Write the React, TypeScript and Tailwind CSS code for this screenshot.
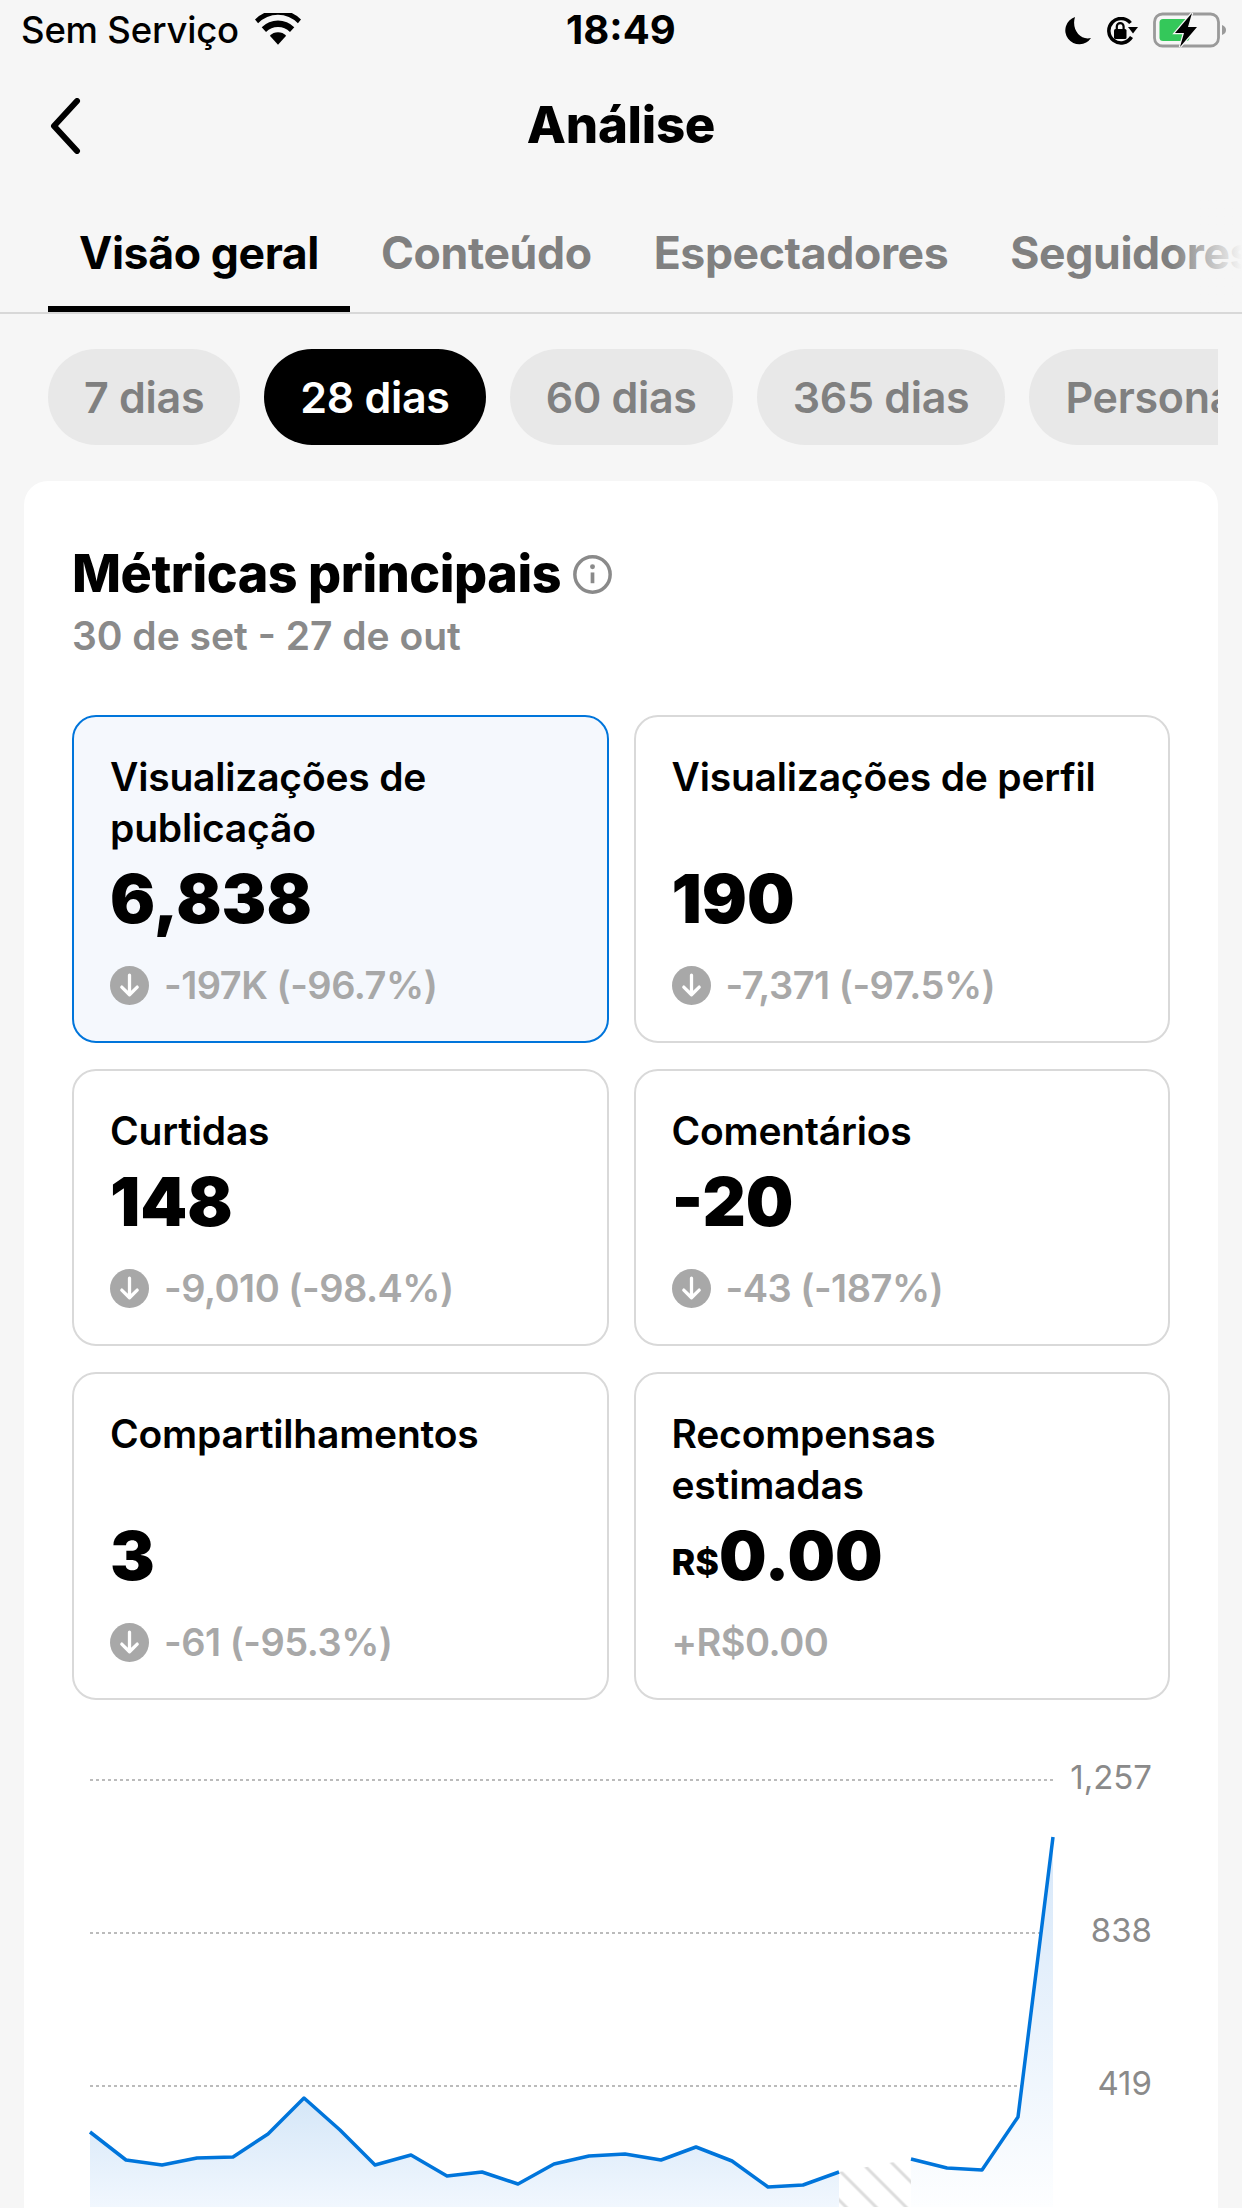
const F = "font-['Inter','Noto_Sans',sans-serif]";

const pts: [number, number][] = [[90,2133],[126,2161],[162,2166],[197,2159],[233,2158],[268,2135],[304,2099],[340,2131],[375,2166],[411,2156],[447,2177],[482,2173],[518,2185],[554,2165],[589,2157],[625,2155],[661,2161],[696,2148],[732,2162],[768,2188],[803,2186],[839,2173]];
const pts2: [number, number][] = [[911,2160],[947,2169],[982,2171],[1018,2118],[1053,1838]];
const line = (p: [number, number][]) => p.map((q) => q.join(",")).join(" ");

function Down() {
  return (
    <svg viewBox="0 0 38 38" className="w-[39px] h-[39px] shrink-0">
      <circle cx="19" cy="19" r="19" fill="#a8a8a8" />
      <path d="M19 9v19M11.5 20.5 19 28l7.5-7.5" fill="none" stroke="#fff" strokeWidth="3.2" strokeLinecap="round" strokeLinejoin="round" />
    </svg>
  );
}

function Metric({ label, value, prefix, change, active, icon = true, tall }: { label: string[]; value: string; prefix?: string; change: string; active?: boolean; icon?: boolean; tall?: boolean }) {
  return (
    <div className={`flex flex-col rounded-[24px] border-2 px-[36px] pt-[34px] ${tall ? "h-[328px]" : "h-[277px]"} ${active ? "border-[#0075db] bg-[#f5f8fd]" : "border-[#d9d9d9] bg-white"}`}>
      <div className={`text-[39px] leading-[51px] font-semibold tracking-[-0.2px] text-black whitespace-nowrap ${tall ? "h-[102px]" : "h-[51px]"}`}>
        {label.map((l) => <div key={l}>{l}</div>)}
      </div>
      <div className="mt-[6px] h-[80px] flex items-center text-[67px] leading-[80px] font-black text-black">
        {prefix && <span className="text-[36px] font-extrabold mt-[12px]">{prefix}</span>}
        {value}
      </div>
      <div className="mt-[21px] flex items-center gap-[15px] text-[38px] leading-[51px] font-semibold tracking-[-0.5px] text-[#a8a8a8]">
        {icon && <Down />}
        <span>{change}</span>
      </div>
    </div>
  );
}

export default function App() {
  return (
    <div className={`${F} w-[1242px] h-[2208px] overflow-hidden bg-[#f6f6f6] text-black`}>
      <div className="h-[60px] relative flex items-center justify-between pl-[21px] pr-[15px]">
        <div className="flex items-center gap-[16px]">
          <span className="text-[36.5px] leading-[60px] font-medium tracking-[-0.2px]">Sem Serviço</span>
          <svg viewBox="0 0 48 34" className="w-[46px] h-[33px] -mt-[2px]">
            <path d="M24 33 15.5 23.5a12 12 0 0 1 17 0Z" fill="#000" />
            <path d="M11.5 19.5 7 14.6a24 24 0 0 1 34 0l-4.5 4.9a18 18 0 0 0-25 0Z" fill="#000" />
            <path d="M3.2 10.5 0 6.5a34 34 0 0 1 48 0l-3.2 4a29 29 0 0 0-41.6 0Z" fill="#000" />
          </svg>
        </div>
        <span className="absolute left-[566px] top-0 text-[40px] leading-[60px] font-bold">18:49</span>
        <div className="flex items-center gap-[15px]">
          <svg viewBox="0 0 28 28" className="w-[28px] h-[28px] mt-[2px]">
            <path d="M12 0A14 14 0 1 0 28 21C18 24 8 13 12 0Z" fill="#000" />
          </svg>
          <svg viewBox="0 0 32 28" className="w-[32px] h-[28px] mt-[2px]">
            <path d="M25.5 20A12.2 12.2 0 1 1 24.5 6" fill="none" stroke="#000" strokeWidth="3.5" />
            <path d="M22 10h10l-5 6.5Z" fill="#000" />
            <rect x="8" y="12" width="12.5" height="10" rx="1.5" fill="#000" />
            <path d="M10.8 13V9.5a3.4 3.4 0 0 1 6.8 0V13" fill="none" stroke="#000" strokeWidth="2.2" />
          </svg>
          <svg viewBox="0 0 74 36" className="w-[74px] h-[36px]">
            <rect x="1.5" y="2" width="64" height="32" rx="8" fill="none" stroke="#9a9a9a" strokeWidth="2.8" />
            <path d="M69 13c3 1 4 3 4 5s-1 4-4 5Z" fill="#9a9a9a" />
            <rect x="6.5" y="7" width="30" height="22" rx="3.5" fill="#34c85a" />
            <path d="M39 1 22 21h9l-4 14 17-20h-9Z" fill="#000" stroke="#f6f6f6" strokeWidth="2.5" paintOrder="stroke" />
          </svg>
        </div>
      </div>

      <div className="h-[130px] relative flex items-center justify-center">
        <svg viewBox="0 0 32 56" className="absolute left-[49px] top-[38px] w-[32px] h-[56px]">
          <path d="M28 3 5 28l23 25" fill="none" stroke="#000" strokeWidth="6" strokeLinecap="round" strokeLinejoin="round" />
        </svg>
        <span className="text-[51px] leading-[60px] font-extrabold tracking-[-0.3px]">Análise</span>
      </div>

      <div className="relative h-[124px] border-b-2 border-[#d8d8d8] flex items-start pl-[48px] overflow-hidden">
        {["Visão geral", "Conteúdo", "Espectadores", "Seguidores"].map((t, i) => (
          <div key={t} className={`h-[122px] px-[31px] pt-[33px] shrink-0 text-[44.6px] leading-[60px] font-bold tracking-[-0.4px] ${i === 0 ? "text-black border-b-[6px] border-black" : "text-[#808080]"}`}>{t}</div>
        ))}
        <div className="absolute right-0 top-0 h-full w-[70px] bg-gradient-to-r from-transparent to-[#f6f6f6]" />
      </div>

      <div className="mt-[35px] ml-[48px] w-[1170px] h-[96px] flex gap-[24px] overflow-hidden">
        {["7 dias", "28 dias", "60 dias", "365 dias", "Personalizado"].map((t, i) => (
          <div key={t} className={`h-[96px] px-[36px] shrink-0 rounded-full flex items-center text-[43px] font-semibold tracking-[-0.3px] ${i === 1 ? "bg-black text-white" : "bg-[#e8e8e8] text-[#808080]"}`}>{t}</div>
        ))}
      </div>

      <div className="mx-[24px] mt-[36px] rounded-t-[24px] bg-white px-[48px] h-[1800px]">
        <div className="pt-[63px] flex items-center gap-[12px]">
          <span className="text-[52px] leading-[60px] font-extrabold tracking-[-0.45px]">Métricas principais</span>
          <svg viewBox="0 0 38 38" className="w-[39px] h-[39px]">
            <circle cx="19" cy="19" r="17.2" fill="none" stroke="#8a8a8a" strokeWidth="3.4" />
            <circle cx="19" cy="11.5" r="2.4" fill="#8a8a8a" />
            <path d="M19 17v10.5" stroke="#8a8a8a" strokeWidth="3.6" />
          </svg>
        </div>
        <div className="mt-[7px] text-[39px] leading-[50px] font-semibold text-[#8a8a8a]">30 de set - 27 de out</div>

        <div className="mt-[54px] grid grid-cols-2 gap-x-[25px] gap-y-[26px]">
          <Metric tall active label={["Visualizações de", "publicação"]} value="6,838" change="-197K (-96.7%)" />
          <Metric tall label={["Visualizações de perfil"]} value="190" change="-7,371 (-97.5%)" />
          <Metric label={["Curtidas"]} value="148" change="-9,010 (-98.4%)" />
          <Metric label={["Comentários"]} value="-20" change="-43 (-187%)" />
          <Metric tall label={["Compartilhamentos"]} value="3" change="-61 (-95.3%)" />
          <Metric tall icon={false} label={["Recompensas", "estimadas"]} prefix="R$" value="0.00" change="+R$0.00" />
        </div>

        <svg viewBox="72 1740 1098 468" className="mt-[39px] w-[1098px] h-[468px]">
          <defs>
            <linearGradient id="a" gradientUnits="userSpaceOnUse" x1="0" y1="2090" x2="0" y2="2208">
              <stop offset="0" stopColor="#d2e5f7" />
              <stop offset="1" stopColor="#f1f7fe" />
            </linearGradient>
            <linearGradient id="b" gradientUnits="userSpaceOnUse" x1="0" y1="1840" x2="0" y2="2208">
              <stop offset="0" stopColor="#d6e7f9" />
              <stop offset="1" stopColor="#fdfeff" />
            </linearGradient>
            <pattern id="h" width="21.2" height="21.2" patternUnits="userSpaceOnUse" patternTransform="translate(843 2175) rotate(45)">
              <rect width="21.2" height="1.5" y="0" fill="#dcdcdc" />
              <rect width="21.2" height="1.5" y="19.7" fill="#dcdcdc" />
            </pattern>
          </defs>
          {[1781, 1934, 2087].map((y) => (
            <line key={y} x1="90" x2="1053" y1={y} y2={y} stroke="#bbbbbb" strokeWidth="2" strokeDasharray="3 3" />
          ))}
          <polygon points={`90,2208 ${line(pts)} 839,2208`} fill="url(#a)" />
          <polygon points={`911,2208 ${line(pts2)} 1053,2208`} fill="url(#b)" />
          <polygon points="839,2173 911,2160 911,2208 839,2208" fill="url(#h)" />
          <polyline points={line(pts)} fill="none" stroke="#0075db" strokeWidth="3.5" strokeLinejoin="round" />
          <polyline points={line(pts2)} fill="none" stroke="#0075db" strokeWidth="3.5" strokeLinejoin="round" />
          <g fill="#8a8a8a" fontSize="33" textAnchor="end" fontFamily="Inter, sans-serif">
            <text x="1152" y="1790">1,257</text>
            <text x="1152" y="1943">838</text>
            <text x="1152" y="2096">419</text>
          </g>
        </svg>
      </div>
    </div>
  );
}
